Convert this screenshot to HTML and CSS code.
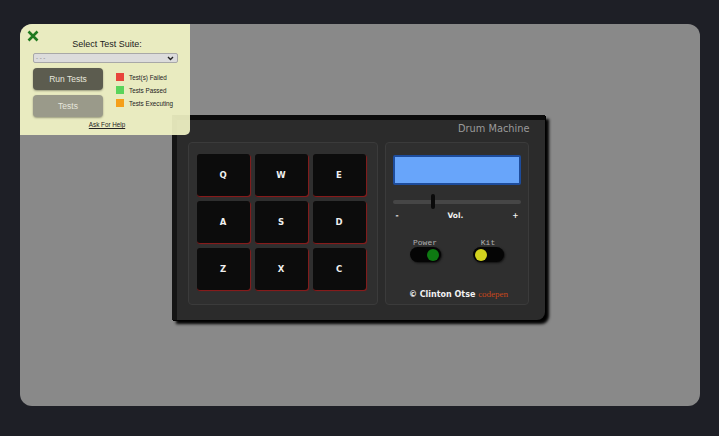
FILE: index.html
```html
<!DOCTYPE html>
<html>
<head>
<meta charset="utf-8">
<link rel="stylesheet" href="styles.css">
</head>
<body>
<div class="frame">
  <div class="stage">
    <div class="drum-machine">
      <div class="dm-header">Drum Machine</div>
      <div class="dm-body">
        <div class="pad-bank">
          <div class="pad">Q</div><div class="pad">W</div><div class="pad">E</div>
          <div class="pad">A</div><div class="pad">S</div><div class="pad">D</div>
          <div class="pad">Z</div><div class="pad">X</div><div class="pad">C</div>
        </div>
        <div class="controls">
          <div class="display"></div>
          <div class="slider"><div class="thumb"></div></div>
          <div class="vol-row"><span>-</span><span>Vol.</span><span>+</span></div>
          <div class="switches">
            <div class="switch">
              <div class="sw-label">Power</div>
              <div class="toggle on"><div class="dot green"></div></div>
            </div>
            <div class="switch">
              <div class="sw-label">Kit</div>
              <div class="toggle"><div class="dot yellow"></div></div>
            </div>
          </div>
          <div class="credit">© Clinton Otse <span class="codepen">codepen</span></div>
        </div>
      </div>
    </div>
  </div>
  <div class="test-panel">
    <svg class="close" width="12" height="12" viewBox="0 0 12 12"><path d="M1.5 1.5 L10.5 10.5 M10.5 1.5 L1.5 10.5" stroke="#1f7a1f" stroke-width="2.6" stroke-linecap="butt"/></svg>
    <div class="tp-title">Select Test Suite:</div>
    <div class="tp-select"><span>- - -</span>
      <svg width="7" height="5" viewBox="0 0 7 5"><path d="M1 1 L3.5 3.5 L6 1" stroke="#222" stroke-width="1.4" fill="none"/></svg>
    </div>
    <div class="tp-main">
      <div class="tp-buttons">
        <div class="btn run">Run Tests</div>
        <div class="btn tests">Tests</div>
      </div>
      <div class="legend">
        <div class="leg"><i class="sq red"></i>Test(s) Failed</div>
        <div class="leg"><i class="sq green"></i>Tests Passed</div>
        <div class="leg"><i class="sq orange"></i>Tests Executing</div>
      </div>
    </div>
    <div class="help">Ask For Help</div>
  </div>
</div>
</body>
</html>
```

FILE: styles.css
```css
* { box-sizing: border-box; }
html, body { margin: 0; padding: 0; }
body {
  width: 719px;
  height: 436px;
  background: #1e1f26;
  padding: 24px 19px 30px 20px;
  font-family: "Liberation Sans", Arial, sans-serif;
}
.frame {
  position: relative;
  width: 680px;
  height: 382px;
  background: #898989;
  border-radius: 12px;
  overflow: hidden;
}
.stage {
  width: 100%;
  height: 100%;
  display: flex;
  justify-content: center;
  padding-top: 91px;
  padding-right: 4px;
}
.drum-machine {
  width: 373px;
  height: 205px;
  background: #2b2b2b;
  border-top: 5px solid #0b0b0b;
  border-left: 5px solid #151515;
  border-radius: 0 0 8px 0;
  box-shadow: 4px 4px 3px #000, 1px 1px 0 #000;
  display: flex;
  flex-direction: column;
}
.dm-header {
  height: 22px;
  text-align: right;
  padding-right: 15px;
  padding-top: 3px;
  color: #9a9a9a;
  font-family: "DejaVu Sans", sans-serif;
  font-size: 9.8px;
}
.dm-body {
  display: flex;
  gap: 7px;
  padding: 0 0 0 11px;
}
.pad-bank {
  width: 190px;
  height: 163px;
  background: #2f2f2f;
  border: 1px solid #3b3b3b;
  border-radius: 4px;
  display: grid;
  grid-template-columns: repeat(3, 53px);
  grid-template-rows: repeat(3, 42px);
  column-gap: 5px;
  row-gap: 5px;
  padding: 11px 0 0 8px;
}
.pad {
  background: #0c0c0c;
  border-radius: 3px;
  box-shadow: 1px 1px 1px #8a1c1c, 0 1px 0 #6a1414;
  color: #f0f0f0;
  font-family: "DejaVu Sans", sans-serif;
  font-weight: bold;
  font-size: 8.5px;
  display: flex;
  align-items: center;
  justify-content: center;
}
.controls {
  width: 144px;
  height: 163px;
  background: #2f2f2f;
  border: 1px solid #3b3b3b;
  border-radius: 4px;
  display: flex;
  flex-direction: column;
  align-items: center;
  padding-top: 12px;
}
.display {
  width: 128px;
  height: 30px;
  background: #68a5fa;
  border: 2px solid #1d4c9c;
  border-radius: 2px;
}
.slider {
  position: relative;
  width: 128px;
  height: 4px;
  background: #464646;
  border-radius: 2px;
  margin-top: 15px;
}
.thumb {
  position: absolute;
  left: 38px;
  top: -6px;
  width: 4px;
  height: 15px;
  background: #0a0a0a;
  border-radius: 2px;
}
.vol-row {
  width: 128px;
  display: flex;
  justify-content: space-between;
  padding: 0 2px 0 3px;
  margin-top: 7px;
  color: #f2f2f2;
  font-family: "DejaVu Sans", sans-serif;
  font-weight: bold;
  font-size: 7.5px;
}
.switches {
  display: flex;
  gap: 32px;
  margin-top: 18px;
}
.switch {
  display: flex;
  flex-direction: column;
  align-items: center;
}
.sw-label {
  color: #b0b0b0;
  font-family: "Liberation Mono", "DejaVu Sans Mono", monospace;
  font-weight: normal;
  font-size: 8px;
  line-height: 9px;
  margin-bottom: 0;
}
.toggle {
  width: 31px;
  height: 15px;
  background: #050505;
  border-radius: 8px;
  box-shadow: 1px 1px 2px #111;
  display: flex;
  align-items: center;
  padding: 0 2px;
}
.toggle.on { justify-content: flex-end; }
.dot {
  width: 12px;
  height: 12px;
  border-radius: 50%;
}
.dot.green { background: #0e7a12; }
.dot.yellow { background: #d2d21e; }
.credit {
  margin-top: 27px;
  color: #f2f2f2;
  font-family: "DejaVu Sans", sans-serif;
  font-weight: bold;
  font-size: 8px;
  padding-left: 4px;
}
.codepen {
  color: #c8471c;
  font-family: "Liberation Serif", serif;
  font-weight: normal;
  font-size: 9px;
}
.test-panel {
  position: absolute;
  left: 0;
  top: 0;
  width: 170px;
  height: 111px;
  background: rgba(240, 242, 196, 0.93);
  border-radius: 0 0 5px 0;
  padding: 0 12px 0 13px;
}
.close {
  position: absolute;
  left: 7px;
  top: 6px;
}
.tp-title {
  text-align: center;
  font-size: 9px;
  color: #222;
  padding-top: 15px;
  line-height: 10px;
  padding-left: 3px;
}
.tp-select {
  margin-top: 4px;
  height: 10px;
  background: #dcdcdc;
  border: 1px solid #a8a8a8;
  border-radius: 2px;
  display: flex;
  align-items: center;
  justify-content: space-between;
  padding: 0 3px 0 2px;
  font-size: 6px;
  color: #777;
}
.tp-main {
  display: flex;
  margin-top: 5px;
}
.tp-buttons {
  display: flex;
  flex-direction: column;
  gap: 5px;
  width: 70px;
}
.btn {
  height: 22px;
  border-radius: 4px;
  color: #e6e6dc;
  font-size: 8.5px;
  display: flex;
  align-items: center;
  justify-content: center;
  box-shadow: 0 1px 2px rgba(0, 0, 0, 0.35);
}
.btn.run { background: #5c5c4f; }
.btn.tests { background: #9a9a8a; }
.legend {
  display: flex;
  flex-direction: column;
  gap: 5px;
  padding-top: 5px;
  padding-left: 13px;
}
.leg {
  display: flex;
  align-items: center;
  gap: 5px;
  font-size: 6.3px;
  color: #222;
  height: 8px;
}
.sq {
  display: block;
  width: 8px;
  height: 8px;
}
.sq.red { background: #e8453c; }
.sq.green { background: #5bd45b; }
.sq.orange { background: #f5a01a; }
.help {
  text-align: center;
  font-size: 6.3px;
  color: #222;
  text-decoration: underline;
  margin-top: 4px;
  padding-left: 3px;
}
```
